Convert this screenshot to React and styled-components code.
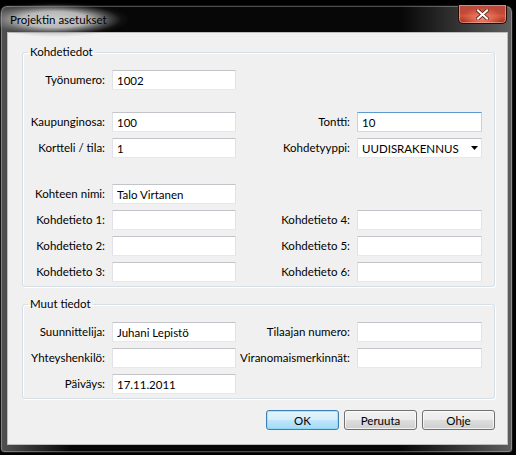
import React from 'react'
import styled, { createGlobalStyle } from 'styled-components'

const FONT = `"Segoe UI", Lato, "Noto Sans", sans-serif`

const GlobalStyle = createGlobalStyle`
  html, body {
    margin: 0;
    padding: 0;
    background: #000;
  }
  body {
    font-family: ${FONT};
    font-size: 11.5px;
    color: #000;
  }
`

const Window = styled.div`
  width: 513px;
  height: 448px;
  margin-top: 5px;
  box-sizing: border-box;
  border: 1px solid #151515;
  border-radius: 7px 7px 4px 4px;
  box-shadow: inset 0 0 0 1px rgba(255, 255, 255, 0.28);
  background:
    linear-gradient(to right, rgba(95, 95, 95, 0.85) 0, rgba(20, 20, 20, 0) 70px, rgba(20, 20, 20, 0) 400px, rgba(110, 110, 110, 0.85) 100%),
    #070707;
  padding: 0 5px 8px 7px;
  display: flex;
  flex-direction: column;
`

const TitleBar = styled.div`
  height: 27px;
  display: flex;
  align-items: center;
  justify-content: space-between;
`

const TitleText = styled.span`
  position: relative;
  z-index: 0;
  margin-left: 2px;
  font-size: 11.5px;
  color: #000;

  &::before {
    content: '';
    position: absolute;
    z-index: -1;
    left: -30px;
    right: -40px;
    top: -11px;
    bottom: -11px;
    background: radial-gradient(ellipse closest-side at 45% 50%, rgba(212, 212, 212, 0.97) 0%, rgba(200, 200, 200, 0.9) 45%, rgba(150, 150, 150, 0.45) 72%, rgba(90, 90, 90, 0.12) 88%, rgba(60, 60, 60, 0) 100%);
  }
`

const CloseButton = styled.div`
  align-self: flex-start;
  margin-top: -1px;
  width: 49px;
  height: 19px;
  box-sizing: border-box;
  border: 1px solid #2a0a05;
  border-top: none;
  border-radius: 0 0 5px 5px;
  background:
    radial-gradient(ellipse at 50% 75%, rgba(255, 140, 110, 0.9) 0, rgba(255, 120, 90, 0) 60%),
    linear-gradient(to bottom, #b6493b 0%, #c24a36 45%, #d0553d 60%, #a52d1c 100%);
  box-shadow: inset 0 0 0 1px rgba(255, 220, 210, 0.45);
  display: flex;
  align-items: center;
  justify-content: center;
`

const Client = styled.div`
  flex: 1;
  background: #f0f0f0;
  box-shadow: 0 0 0 1px #bdbdbd;
  padding: 11px 12px 0 14px;
  display: flex;
  flex-direction: column;
`

const GroupBox = styled.fieldset`
  margin: ${p => p.$top || 0}px 0 0 0;
  padding: 10px 0 4px 0;
  min-width: 0;
  border: 1px solid #d5dfe5;
  border-radius: 3px;
  box-shadow: inset 1px 1px 0 #fff, 1px 1px 0 #fff;
  display: flex;
  flex-direction: column;
  gap: 6px;
`

const Legend = styled.legend`
  margin-left: 5px;
  padding: 0 2px;
  font-size: 11.5px;
  line-height: 16px;
`

const Row = styled.div`
  display: grid;
  grid-template-columns: 82px 124px 107px 125px;
  column-gap: 7px;
  align-items: center;
  height: 20px;
  margin-top: ${p => p.$space || 0}px;
`

const Label = styled.label`
  display: flex;
  justify-content: flex-end;
  white-space: nowrap;
  font-size: 11.5px;
  line-height: 20px;
`

const TextBox = styled.input`
  box-sizing: border-box;
  width: 100%;
  height: 20px;
  margin: 0;
  padding: 0 4px;
  font-family: ${FONT};
  font-size: 11.5px;
  color: #000;
  background: #fff;
  border: 1px solid;
  border-color: ${p => (p.$focused ? '#5b9bd0 #b9d5ec #c5ddf0 #b9d5ec' : '#c2c4c9 #dfe2e8 #e3e9ef #dfe2e8')};
  outline: none;
`

const ComboBox = styled.div`
  box-sizing: border-box;
  height: 20px;
  padding: 0 3px 0 4px;
  background: #fff;
  border: 1px solid;
  border-color: #c2c4c9 #dfe2e8 #e3e9ef #dfe2e8;
  display: flex;
  align-items: center;
  justify-content: space-between;
  font-size: 11.5px;
`

const ButtonBar = styled.div`
  margin-top: 11px;
  display: flex;
  justify-content: flex-end;
  gap: 5px;
`

const Button = styled.button`
  width: 73px;
  height: 20px;
  box-sizing: border-box;
  margin: 0;
  padding: 0;
  font-family: ${FONT};
  font-size: 11.5px;
  color: #000;
  border-radius: 3px;
  border: 1px solid ${p => (p.$primary ? '#3c7fb1' : '#707070')};
  background: ${p =>
    p.$primary
      ? 'linear-gradient(to bottom, #e5f4fc 0%, #d4eefb 50%, #bde6fd 51%, #a6d9f4 100%)'
      : 'linear-gradient(to bottom, #f2f2f2 0%, #ebebeb 50%, #dddddd 51%, #cfcfcf 100%)'};
  box-shadow: inset 0 0 0 1px ${p => (p.$primary ? 'rgba(120,220,250,0.6)' : 'rgba(255,255,255,0.7)')};
`

const Field = ({ label, value = '', focused }) => (
  <>
    <Label>{label}</Label>
    <TextBox readOnly value={value} $focused={focused} />
  </>
)

const Empty = () => (
  <>
    <span />
    <span />
  </>
)

export default function App() {
  return (
    <>
      <GlobalStyle />
      <Window>
        <TitleBar>
          <TitleText>Projektin asetukset</TitleText>
          <CloseButton>
            <svg width="13" height="11" viewBox="0 0 13 11">
              <path d="M2 1.5 L11 9.5 M11 1.5 L2 9.5" stroke="#4a1208" strokeWidth="3.6" strokeLinecap="square" />
              <path d="M2 1.5 L11 9.5 M11 1.5 L2 9.5" stroke="#fff" strokeWidth="2.2" strokeLinecap="square" />
            </svg>
          </CloseButton>
        </TitleBar>

        <Client>
          <GroupBox>
            <Legend>Kohdetiedot</Legend>
            <Row>
              <Field label="Työnumero:" value="1002" />
              <Empty />
            </Row>
            <Row $space={16}>
              <Field label="Kaupunginosa:" value="100" />
              <Field label="Tontti:" value="10" focused />
            </Row>
            <Row>
              <Field label="Kortteli / tila:" value="1" />
              <Label>Kohdetyyppi:</Label>
              <ComboBox>
                <span>UUDISRAKENNUS</span>
                <svg width="7" height="4" viewBox="0 0 7 4">
                  <path d="M0 0 H7 L3.5 4 Z" fill="#000" />
                </svg>
              </ComboBox>
            </Row>
            <Row $space={20}>
              <Field label="Kohteen nimi:" value="Talo Virtanen" />
              <Empty />
            </Row>
            <Row>
              <Field label="Kohdetieto 1:" />
              <Field label="Kohdetieto 4:" />
            </Row>
            <Row>
              <Field label="Kohdetieto 2:" />
              <Field label="Kohdetieto 5:" />
            </Row>
            <Row>
              <Field label="Kohdetieto 3:" />
              <Field label="Kohdetieto 6:" />
            </Row>
          </GroupBox>

          <GroupBox $top={9}>
            <Legend>Muut tiedot</Legend>
            <Row>
              <Field label="Suunnittelija:" value="Juhani Lepistö" />
              <Field label="Tilaajan numero:" />
            </Row>
            <Row>
              <Field label="Yhteyshenkilö:" />
              <Field label="Viranomaismerkinnät:" />
            </Row>
            <Row>
              <Field label="Päiväys:" value="17.11.2011" />
              <Empty />
            </Row>
          </GroupBox>

          <ButtonBar>
            <Button $primary>OK</Button>
            <Button>Peruuta</Button>
            <Button>Ohje</Button>
          </ButtonBar>
        </Client>
      </Window>
    </>
  )
}
